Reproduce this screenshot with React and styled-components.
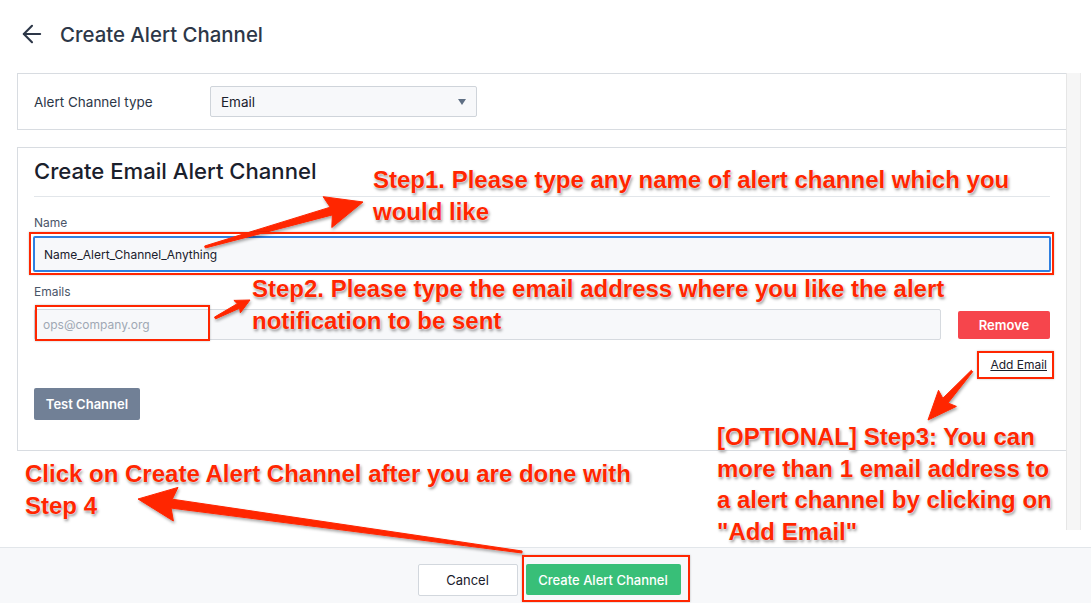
import React from 'react';
import styled, { createGlobalStyle } from 'styled-components';
import { ArrowLeft } from 'lucide-react';

const GlobalStyle = createGlobalStyle`
  * { box-sizing: border-box; }
  body {
    margin: 0;
    background: #fff;
    font-family: Inter, "Noto Sans", sans-serif;
    color: #2d3748;
  }
`;

// annotation layer data (screenshot callouts drawn on top of the form)
const notes = [
  { left: 373, top: 164, lines: ['Step1. Please type any name of alert channel which you', 'would like'] },
  { left: 252, top: 273, lines: ['Step2. Please type the email address where you like the alert', 'notification to be sent'] },
  { left: 717, top: 421, lines: ['[OPTIONAL] Step3: You can', 'more than 1 email address to', 'a alert channel by clicking on', '"Add Email"'] },
  { left: 25, top: 458, lines: ['Click on Create Alert Channel after you are done with', 'Step 4'] },
];

const boxes = [
  { left: 29, top: 232, width: 1025, height: 43 },
  { left: 35, top: 305, width: 175, height: 36 },
  { left: 977, top: 351, width: 77, height: 28 },
  { left: 522, top: 555, width: 168, height: 47 },
];

const arrows = [
  { tail: [205, 247], tip: [363, 202], head: 33, half: 16, neck: 4, end: 1 },
  { tail: [215, 318], tip: [250, 300], head: 13, half: 7, neck: 2.5, end: 1 },
  { tail: [972, 371], tip: [928, 420], head: 26, half: 12, neck: 3.5, end: 1 },
  { tail: [522, 552], tip: [138, 499], head: 34, half: 17, neck: 4.5, end: 1 },
];

const arrowPoints = ({ tail, tip, head, half, neck, end }) => {
  const dx = tip[0] - tail[0];
  const dy = tip[1] - tail[1];
  const len = Math.hypot(dx, dy);
  const ux = dx / len;
  const uy = dy / len;
  const nx = -uy;
  const ny = ux;
  const bx = tip[0] - ux * head;
  const by = tip[1] - uy * head;
  const wx = bx - ux * head * 0.12;
  const wy = by - uy * head * 0.12;
  const p = [
    [tail[0] + nx * end, tail[1] + ny * end],
    [bx + nx * neck, by + ny * neck],
    [wx + nx * half, wy + ny * half],
    tip,
    [wx - nx * half, wy - ny * half],
    [bx - nx * neck, by - ny * neck],
    [tail[0] - nx * end, tail[1] - ny * end],
  ];
  return p.map((pt) => pt.map((v) => v.toFixed(1)).join(',')).join(' ');
};

const App = () => {
  return (
    <>
      <GlobalStyle />
      <Page>
        <Header>
          <BackButton>
            <ArrowLeft size={28} strokeWidth={1.8} />
          </BackButton>
          <Title>Create Alert Channel</Title>
        </Header>

        <Main>
          <Cards>
            <TypeCard>
              <FieldLabel>Alert Channel type</FieldLabel>
              <Select>
                <span>Email</span>
                <Caret />
              </Select>
            </TypeCard>

            <FormCard>
              <CardHeading>Create Email Alert Channel</CardHeading>
              <Label $top={18}>Name</Label>
              <TextInput $focused $gap={5}>Name_Alert_Channel_Anything</TextInput>
              <Label $top={12}>Emails</Label>
              <EmailRow>
                <TextInput $grow $placeholder>ops@company.org</TextInput>
                <DangerButton>Remove</DangerButton>
              </EmailRow>
              <LinkRow>
                <TextLink>Add Email</TextLink>
              </LinkRow>
              <GrayButton>Test Channel</GrayButton>
            </FormCard>
          </Cards>
          <ScrollTrack />
        </Main>

        <Footer>
          <CancelButton>Cancel</CancelButton>
          <PrimaryButton>Create Alert Channel</PrimaryButton>
        </Footer>

        <Overlay width="1091" height="603">
          <defs>
            <filter id="shade" x="-20%" y="-20%" width="140%" height="140%">
              <feDropShadow dx="1" dy="2" stdDeviation="1.4" floodColor="#000" floodOpacity="0.35" />
            </filter>
          </defs>
          {arrows.map((a, i) => (
            <polygon
              key={i}
              points={arrowPoints(a)}
              fill="#ff2600"
              stroke="#ff2600"
              strokeWidth="1"
              strokeLinejoin="round"
              filter="url(#shade)"
            />
          ))}
        </Overlay>

        {boxes.map((b, i) => (
          <Highlight
            key={i}
            style={{ left: b.left, top: b.top, width: b.width, height: b.height }}
          />
        ))}

        {notes.map((n, i) => (
          <Note key={i} style={{ left: n.left, top: n.top }}>
            {n.lines.map((line, j) => (
              <div key={j}>{line}</div>
            ))}
          </Note>
        ))}
      </Page>
    </>
  );
};

const Page = styled.div`
  position: relative;
  width: 1091px;
  height: 603px;
  display: flex;
  flex-direction: column;
  overflow: hidden;
  background: #fff;
`;

const Header = styled.header`
  height: 73px;
  flex-shrink: 0;
  display: flex;
  align-items: flex-start;
  gap: 14px;
  padding: 20px 0 0 18px;
`;

const BackButton = styled.div`
  width: 28px;
  height: 28px;
  display: flex;
  align-items: center;
  justify-content: center;
  color: #2d3748;
`;

const Title = styled.h1`
  margin: 0;
  padding-top: 1px;
  font-size: 20.4px;
  line-height: 28px;
  font-weight: 500;
  color: #2d3748;
`;

const Main = styled.main`
  flex: 1;
  display: flex;
  padding: 0 10px 17px 17px;
  min-height: 0;
`;

const Cards = styled.div`
  flex: 1;
  display: flex;
  flex-direction: column;
  gap: 17px;
`;

const ScrollTrack = styled.div`
  width: 15px;
  background: #f6f6f6;
  border-left: 1px solid #e6e6e6;
  border-right: 1px solid #ececec;
`;

const TypeCard = styled.section`
  height: 57px;
  display: flex;
  align-items: center;
  padding: 0 16px;
  border: 1px solid #d8dce1;
  border-right: none;
`;

const FieldLabel = styled.span`
  width: 176px;
  font-size: 13.5px;
  color: #2d3748;
`;

const Select = styled.div`
  width: 267px;
  height: 31px;
  display: flex;
  align-items: center;
  justify-content: space-between;
  padding: 0 10px 0 10px;
  background: #f7f8fa;
  border: 1px solid #cfd4da;
  border-radius: 2px;
  font-size: 13.5px;
  color: #1a202c;
`;

const Caret = styled.span`
  width: 0;
  height: 0;
  border-left: 4px solid transparent;
  border-right: 4px solid transparent;
  border-top: 6px solid #5f6f84;
`;

const FormCard = styled.section`
  height: 304px;
  display: flex;
  flex-direction: column;
  padding: 9px 16px 0 16px;
  border: 1px solid #d8dce1;
  border-right: none;
`;

const CardHeading = styled.h2`
  margin: 0;
  padding-bottom: 11px;
  border-bottom: 1px solid #e2e6ea;
  font-size: 22.1px;
  line-height: 28px;
  font-weight: 500;
  color: #1a202c;
`;

const Label = styled.label`
  margin-top: ${(p) => p.$top}px;
  font-size: 12px;
  line-height: 16px;
  color: #4a5568;
`;

const TextInput = styled.div`
  flex: ${(p) => (p.$grow ? '1 1 auto' : 'none')};
  margin-top: ${(p) => p.$gap || 0}px;
  height: ${(p) => (p.$focused ? 36 : 31)}px;
  display: flex;
  align-items: center;
  padding: 0 ${(p) => (p.$focused ? 9 : 8)}px;
  margin-left: ${(p) => (p.$focused ? -1 : 0)}px;
  margin-right: ${(p) => (p.$focused ? -1 : 0)}px;
  background: #f7f8fa;
  border: ${(p) => (p.$focused ? '2px solid #2f7fe0' : '1px solid #d6dadf')};
  border-radius: 2px;
  font-size: 12px;
  color: ${(p) => (p.$placeholder ? '#a0a8b4' : '#1a202c')};
`;

const EmailRow = styled.div`
  margin-top: 9px;
  display: flex;
  align-items: center;
  gap: 17px;
`;

const DangerButton = styled.button`
  width: 92px;
  height: 28px;
  border: none;
  border-radius: 2px;
  background: #f6454c;
  color: #fff;
  font-family: inherit;
  font-size: 13px;
  font-weight: 600;
`;

const LinkRow = styled.div`
  margin-top: 17px;
  display: flex;
  justify-content: flex-end;
  padding-right: 3px;
`;

const TextLink = styled.a`
  font-size: 12px;
  line-height: 16px;
  color: #1a202c;
  text-decoration: underline;
`;

const GrayButton = styled.button`
  align-self: flex-start;
  margin-top: 15px;
  width: 106px;
  height: 32px;
  border: none;
  border-radius: 2px;
  background: #718096;
  color: #fff;
  font-family: inherit;
  font-size: 13px;
  font-weight: 600;
`;

const Footer = styled.footer`
  height: 56px;
  flex-shrink: 0;
  display: flex;
  justify-content: center;
  align-items: flex-start;
  gap: 8px;
  padding: 16px 0 0 7px;
  background: #f7f8fa;
  border-top: 1px solid #e2e6ea;
`;

const CancelButton = styled.button`
  width: 100px;
  height: 32px;
  background: #fff;
  border: 1px solid #d2d7dd;
  border-radius: 2px;
  font-family: inherit;
  font-size: 13px;
  color: #1a202c;
`;

const PrimaryButton = styled.button`
  width: 155px;
  height: 31px;
  border: none;
  border-radius: 2px;
  background: #38bf78;
  color: #fff;
  font-family: inherit;
  font-size: 13px;
  font-weight: 500;
`;

const Overlay = styled.svg`
  position: absolute;
  left: 0;
  top: 0;
  pointer-events: none;
`;

const Highlight = styled.div`
  position: absolute;
  border: 2px solid #ff2600;
  box-shadow: 0 0 2px rgba(0, 0, 0, 0.25);
  pointer-events: none;
`;

const Note = styled.div`
  position: absolute;
  font-family: "Liberation Sans", Arial, sans-serif;
  font-weight: 700;
  font-size: 24px;
  line-height: 31.5px;
  color: #ff2600;
  white-space: nowrap;
  text-shadow: 0 0 1px #fff, 0 0 2px #fff, 1px 2px 3px rgba(0, 0, 0, 0.45);
  pointer-events: none;
`;

export default App;
